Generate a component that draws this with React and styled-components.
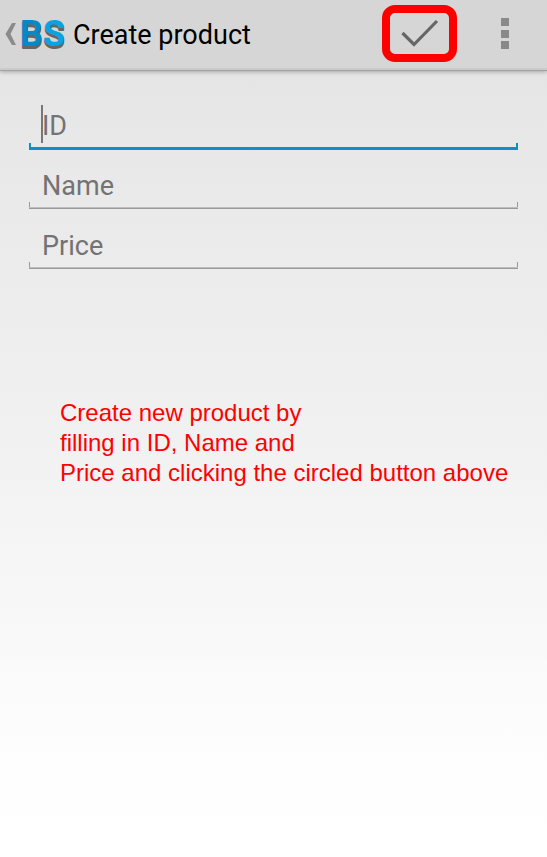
import React from "react";
import styled, { createGlobalStyle } from "styled-components";

const GlobalStyle = createGlobalStyle`
  *, *::before, *::after { box-sizing: border-box; }
  html { height: 100%; }
  body {
    min-height: 100%;
    margin: 0;
    background: linear-gradient(#e1e1e1 0, #e7e7e7 110px, #f1f1f1 440px, #fdfdfd 740px, #ffffff 840px) no-repeat #ffffff;
    font-family: Roboto, sans-serif;
  }
`;

const ActionBar = styled.header`
  display: flex;
  align-items: center;
  height: 71px;
  padding: 0 16px 4px 5px;
  background: #d6d6d6;
  border-bottom: 1px solid #a3a3a3;
  box-shadow: inset 0 -2px #cbcbcb, 0 1px 4px rgba(0, 0, 0, 0.28);
`;

const HomeLink = styled.a`
  display: flex;
  align-items: center;
  gap: 3px;
  flex: none;
  width: 61px;
  height: 48px;
  margin-top: 2px;
  text-decoration: none;
`;

const Logo = styled.span`
  color: #0789c6;
  font-size: 36px;
  font-weight: 700;
  line-height: 48px;
  text-shadow: 0 1px #666666, 0 2px #666666, 0 3px #666666;
`;

const LogoAccent = styled.span`
  color: #08a4e0;
`;

const Title = styled.h1`
  flex: 1;
  margin: 4px 0 0 7px;
  color: #000000;
  font-size: 27px;
  font-weight: 400;
  line-height: 36px;
  white-space: nowrap;
`;

const IconButton = styled.button`
  display: flex;
  align-items: center;
  justify-content: center;
  flex: none;
  width: ${({ $circled }) => ($circled ? 75 : 52)}px;
  height: 57px;
  margin-right: ${({ $circled }) => ($circled ? 22 : 0)}px;
  padding: 0;
  background: transparent;
  border: ${({ $circled }) => ($circled ? "8px solid #ff0000" : "0")};
  border-radius: 13px;
`;

const Form = styled.form`
  display: grid;
  gap: 12px;
  padding: 30px 29px 0;
`;

const Field = styled.div`
  position: relative;
  height: 48px;
`;

const TextInput = styled.input`
  --line: ${({ $active }) => ($active ? "#0d8fc9" : "#999999")};
  --glow: ${({ $active }) => ($active ? "#0d8fc9" : "#bdbdbd")};
  --side: linear-gradient(var(--line), var(--line));
  display: block;
  width: 100%;
  height: ${({ $active }) => ($active ? 49 : 48)}px;
  padding: 1px 13px 0;
  border: 0;
  border-radius: 0;
  outline: 0;
  background:
    linear-gradient(var(--glow) 1px, var(--line) 1px) left bottom / 100% ${({ $active }) => ($active ? 3 : 2)}px no-repeat,
    var(--side) left bottom / ${({ $active }) => ($active ? 2 : 1)}px 7px no-repeat,
    var(--side) right bottom / ${({ $active }) => ($active ? 2 : 1)}px 7px no-repeat;
  color: #333333;
  font: 400 27px/36px Roboto, sans-serif;

  &::placeholder {
    color: #737373;
    opacity: 1;
  }
`;

const Caret = styled.span`
  position: absolute;
  top: 4px;
  left: 12px;
  width: 2px;
  height: 38px;
  background: #777777;
`;

const Instructions = styled.p`
  margin: 129px 29px 0 60px;
  color: #ff0000;
  font: 400 24px/30px "Liberation Sans", Arial, sans-serif;
`;

const Line = styled.span`
  display: block;
`;

const fields = [
  { id: "product-id", label: "ID", active: true },
  { id: "product-name", label: "Name" },
  { id: "product-price", label: "Price" },
];

function BackIcon() {
  return (
    <svg width="12" height="24" viewBox="0 0 12 24" aria-hidden="true">
      <path d="M7 1h4L5.500 12 11 23H7L0.500 12Z" fill="#8b8b8b" />
    </svg>
  );
}

function CheckIcon() {
  return (
    <svg width="38" height="30" viewBox="0 0 38 30" aria-hidden="true">
      <path d="M1.500 15 13 26.500 36 3" fill="none" stroke="#666666" strokeWidth="3.200" />
    </svg>
  );
}

function OverflowIcon() {
  return (
    <svg width="8" height="31" viewBox="0 0 8 31" fill="#898989" aria-hidden="true">
      <rect width="8" height="8" />
      <rect y="12" width="8" height="8" />
      <rect y="23" width="8" height="8" />
    </svg>
  );
}

export default function App() {
  return (
    <>
      <GlobalStyle />
      <ActionBar>
        <HomeLink href="#home" aria-label="Back">
          <BackIcon />
          <Logo>
            B<LogoAccent>S</LogoAccent>
          </Logo>
        </HomeLink>
        <Title>Create product</Title>
        <IconButton type="submit" form="product-form" $circled aria-label="Create product">
          <CheckIcon />
        </IconButton>
        <IconButton type="button" aria-label="More options">
          <OverflowIcon />
        </IconButton>
      </ActionBar>
      <main>
        <Form id="product-form" onSubmit={(event) => event.preventDefault()}>
          {fields.map(({ id, label, active }) => (
            <Field key={id}>
              <TextInput id={id} name={id} placeholder={label} aria-label={label} autoComplete="off" $active={active} />
              {active && <Caret aria-hidden="true" />}
            </Field>
          ))}
        </Form>
        <Instructions>
          <Line>Create new product by</Line>
          <Line>filling in ID, Name and</Line>
          <Line>Price and clicking the circled button above</Line>
        </Instructions>
      </main>
    </>
  );
}
